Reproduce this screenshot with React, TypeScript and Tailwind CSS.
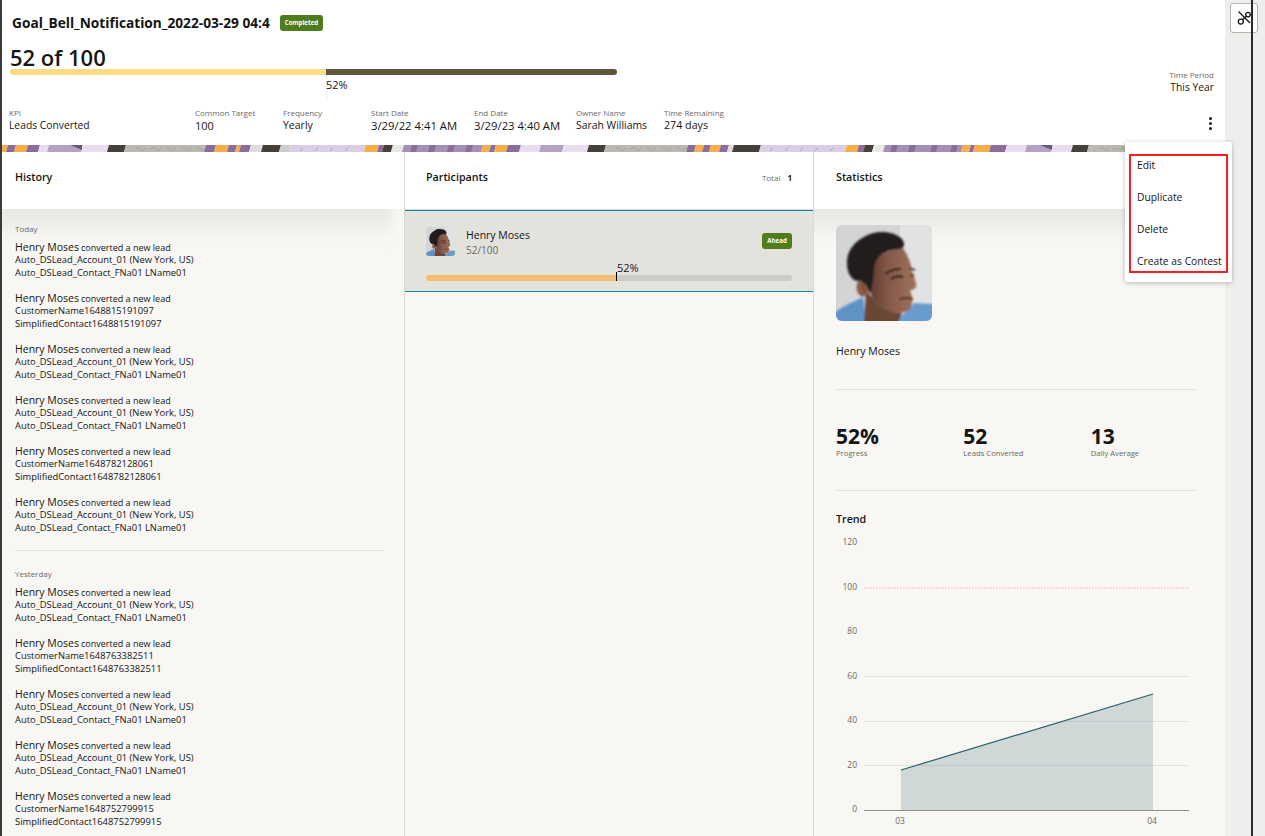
import React from 'react';

const stats = [
  { value: '52%', label: 'Progress' },
  { value: '52', label: 'Leads Converted' },
  { value: '13', label: 'Daily Average' },
];

const details = [
  { label: 'KPI', value: 'Leads Converted', width: 'w-[186px]', size: 'text-[10.3px]' },
  { label: 'Common Target', value: '100', width: 'w-[88px]', size: 'text-[11px]' },
  { label: 'Frequency', value: 'Yearly', width: 'w-[88px]', size: 'text-[10.5px]' },
  { label: 'Start Date', value: '3/29/22 4:41 AM', width: 'w-[103px]', size: 'text-[11.3px]' },
  { label: 'End Date', value: '3/29/23 4:40 AM', width: 'w-[102px]', size: 'text-[11.3px]' },
  { label: 'Owner Name', value: 'Sarah Williams', width: 'w-[88px]', size: 'text-[10.4px]' },
  { label: 'Time Remaining', value: '274 days', width: 'w-[90px]', size: 'text-[10.7px]' },
];

const account = ['Auto_DSLead_Account_01 (New York, US)', 'Auto_DSLead_Contact_FNa01 LName01'];
const contact = (id: string) => [`CustomerName${id}`, `SimplifiedContact${id}`];

const today = [account, contact('1648815191097'), account, account, contact('1648782128061'), account];
const yesterday = [account, contact('1648763382511'), account, account, contact('1648752799915')];

// x0, x1, colour of each slice of the banner, left to right
const O = '#f5ae4a';
const P = '#8a6d9b';
const L = '#e8dcef';
const M = '#b5a1c6';
const D = '#45403a';
const G = '#bbb8b2';
const H = '#dccde6';
const S = '#a48fb6';
const bands: [number, number, string][] = [
  [0, 7, O], [7, 15, P], [15, 27, O], [27, 39, P], [39, 48, L], [48, 82, M], [82, 108, L], [108, 125, D],
  [125, 205, G], [205, 215, P], [215, 228, O], [228, 236, P], [236, 240, O], [240, 250, P], [250, 262, '#ddd'],
  [262, 280, D], [280, 290, '#ccc'], [290, 365, H], [365, 378, O], [378, 383, P], [383, 392, D],
  [392, 403, '#e8e8e4'], [403, 482, S], [482, 490, O], [490, 495, P], [495, 507, O], [507, 520, P],
  [520, 540, L], [540, 563, M], [563, 588, L], [588, 605, D], [605, 687, G], [687, 695, P], [695, 703, O],
  [703, 710, P], [710, 720, O], [720, 728, P], [728, 733, '#ddd'], [733, 760, D], [760, 846, H], [846, 858, O],
  [858, 864, P], [864, 873, D], [873, 884, '#e8e8e4'], [884, 962, S], [962, 970, O], [970, 974, P], [974, 990, O],
  [990, 1006, P], [1006, 1026, L], [1026, 1052, M], [1052, 1072, L], [1072, 1088, D], [1088, 1225, G],
];

// small marks drawn over the grey and lilac slices
const marks = [135, 150, 165, 180, 195, 615, 630, 645, 660, 675, 1098, 1112, 1126];
const hatches = [300, 315, 330, 345, 770, 785, 800, 815, 830];
const stripes = [410, 428, 447, 465, 890, 908, 930, 950];

const Banner = () => (
  <svg width="1225" height="7" viewBox="0 0 1225 7" className="block shrink-0">
    {bands.map(([a, b, c], i) => (
      <polygon key={i} points={`${a + 1},0 ${b + 1},0 ${b - 1},7 ${a - 1},7`} fill={c} />
    ))}
    {stripes.map((x) => (
      <polygon key={x} points={`${x},7 ${x + 2},0 ${x + 8},0 ${x + 6},7`} fill="#8a6d9b" />
    ))}
    {marks.map((x) => (
      <path key={x} d={`M${x} 5 q3 -4 6 -1 t5 -2`} stroke="#9a9791" strokeWidth="0.6" fill="none" />
    ))}
    {hatches.map((x) => (
      <line key={x} x1={x} y1="6" x2={x + 3} y2="3" stroke="#8f7a9e" strokeWidth="0.6" />
    ))}
    <polygon points="70,0 82,0 82,5" fill="#6a5a70" />
    <polygon points="1040,0 1052,0 1052,5" fill="#6a5a70" />
  </svg>
);

const Portrait = ({ className }: { className: string }) => (
  <svg viewBox="0 0 96 96" className={className}>
    <defs>
      <filter id="soft" x="-5%" y="-5%" width="110%" height="110%">
        <feGaussianBlur stdDeviation="0.8" />
      </filter>
      <linearGradient id="skin" x1="0" x2="1" y1="0" y2="0">
        <stop offset="0" stopColor="#5f3d2e" />
        <stop offset="0.4" stopColor="#85594a" />
        <stop offset="1" stopColor="#a0735a" />
      </linearGradient>
    </defs>
    <rect width="96" height="96" fill="#d3d4d6" />
    <rect x="64" width="32" height="96" fill="#e1e2e4" />
    <g filter="url(#soft)">
      <path d="M-2 88 C8 80 20 76 27 72 L30 98 L-2 98Z" fill="#5f93c8" />
      <path d="M60 98 L66 90 C72 86 76 82 78 78 L98 79 L98 98Z" fill="#6a9bcd" />
      <path d="M30 66 L28 98 L62 98 L66 88 C52 88 42 80 36 72Z" fill="#6a4635" />
      <path d="M38 34 C46 27 58 24 66 22 C72 30 75 38 76 46 C78 52 81 58 80 62 C79 65 75 64 74 66 C76 70 77 74 76 78 C76 84 72 88 62 88 C52 88 42 80 36 72 C33 60 34 44 38 34Z" fill="url(#skin)" />
      <ellipse cx="27" cy="62" rx="6.5" ry="9.5" fill="#8c5c44" />
      <path d="M29 56 Q25 60 29 68" stroke="#5d3a2a" strokeWidth="1.2" fill="none" />
      <path d="M12 46 C8 30 16 18 28 12 C40 4 58 6 66 14 C70 20 68 24 62 24 C52 25 44 28 40 36 C37 44 38 50 37 56 L34 70 C32 60 26 54 20 56 C16 54 13 50 12 46Z" fill="#201e1d" />
      <path d="M49 49 Q56 44 65 44" stroke="#241712" strokeWidth="2" fill="none" />
      <path d="M73 43 L79 45" stroke="#241712" strokeWidth="1.5" fill="none" />
      <path d="M55 54 Q61 50 67 52" stroke="#241712" strokeWidth="2.2" fill="none" />
      <path d="M74 51 L78 50" stroke="#241712" strokeWidth="1.6" fill="none" />
      <path d="M63 74 Q70 72 77 74" stroke="#4f2a24" strokeWidth="1.8" fill="none" />
    </g>
  </svg>
);

const Chart = () => {
  const ticks = [
    { v: '120', y: 32 },
    { v: '100', y: 77 },
    { v: '80', y: 121 },
    { v: '60', y: 166 },
    { v: '40', y: 210 },
    { v: '20', y: 255 },
    { v: '0', y: 299 },
  ];
  return (
    <svg width="389" height="310" viewBox="0 16 389 310" className="block" fontFamily="'Open Sans', sans-serif">
      {ticks.map((t) => (
        <text key={t.v} x="37" y={t.y + 3} textAnchor="end" fontSize="8.5" fill="#6b6966">{t.v}</text>
      ))}
      <line x1="44" x2="369" y1="166.5" y2="166.5" stroke="#e2e4e5" />
      <line x1="44" x2="369" y1="211.5" y2="211.5" stroke="#e2e4e5" />
      <line x1="44" x2="369" y1="255.5" y2="255.5" stroke="#e2e4e5" />
      <line x1="44" x2="369" y1="78" y2="78" stroke="#f6c9ca" strokeWidth="1.5" strokeDasharray="1.5 1.5" />
      <polygon points="81,260 333,184 333,300 81,300" fill="#2b5f69" fillOpacity="0.2" />
      <line x1="81" y1="260" x2="333" y2="184" stroke="#2b5f69" strokeWidth="1.2" />
      <line x1="44" x2="369" y1="300.5" y2="300.5" stroke="#8e8e8c" />
      <text x="80" y="314" textAnchor="middle" fontSize="8.5" fill="#6b6966">03</text>
      <text x="332" y="314" textAnchor="middle" fontSize="8.5" fill="#6b6966">04</text>
    </svg>
  );
};

const Entry = ({ lines }: { lines: string[] }) => (
  <div className="h-[51px] text-[#161513]">
    <div className="h-[13px] leading-[13px] whitespace-nowrap relative -top-[2px]">
      <span className="text-[10.5px]">Henry Moses</span><span className="text-[9px] ml-[2px]">converted a new lead</span>
    </div>
    {lines.map((l) => (
      <div key={l} className="h-[12.5px] leading-[12.5px] text-[9.4px] whitespace-nowrap">{l}</div>
    ))}
  </div>
);

const PanelHead = ({ title, children }: { title: string; children?: React.ReactNode }) => (
  <div className="h-[57px] bg-white flex items-start justify-between shrink-0">
    <div className="text-[10.7px] font-semibold text-[#161513] leading-[14px] mt-[18px]">{title}</div>
    {children}
  </div>
);

const TopShade = () => (
  <div className="h-[42px] bg-gradient-to-b from-[#e9e8e4] via-[#ebeae6] to-[#f8f7f3] absolute -top-[12px] -left-[10px] right-[12px] blur-[4px]" />
);

export default function App() {
  return (
    <div className="relative h-[836px] w-[1265px] overflow-hidden flex bg-[#eeeeec] text-[#161513] font-['Open_Sans',sans-serif]">
      <div className="w-[1225px] h-full flex flex-col bg-white shrink-0">
        {/* Goal header */}
        <div className="h-[145px] shrink-0 flex flex-col relative">
          <div className="flex h-[101px] shrink-0">
            <div className="w-[617px] pl-[10px] shrink-0">
              <div className="flex items-center h-[46px] pl-[2px]">
                <div className="w-[259px] mr-[2px] overflow-hidden whitespace-nowrap text-[13.7px] font-bold leading-[16px]">Goal_Bell_Notification_2022-03-29 04:41 AM</div>
                <div className="ml-[7px] h-[16px] w-[43px] rounded-[3px] bg-[#4f7d1e] text-white text-[6.2px] font-bold flex items-center justify-center">Completed</div>
              </div>
              <div className="text-[22px] font-semibold leading-[23px] h-[23px]">52 of 100</div>
              <div className="flex h-[6px] rounded-full overflow-hidden">
                <div className="w-[316px] bg-[#fbdb85]" />
                <div className="flex-1 bg-[#5f553c]" />
              </div>
              <div className="ml-[316px] h-[26px] border-l border-[#eeeeee] text-[11px] leading-[20px] -mr-[10px]">
                <span className="-ml-[1px]">52%</span>
              </div>
            </div>
            <div className="flex-1 flex flex-col items-end pr-[11px] pt-[69px]">
              <div className="text-[8px] text-[#6b6966] leading-[11px]">Time Period</div>
              <div className="text-[10.3px] leading-[14px]">This Year</div>
            </div>
          </div>
          <div className="flex pl-[9px] mt-[6px]">
            {details.map((d) => (
              <div key={d.label} className={`${d.width} shrink-0`}>
                <div className="text-[8px] text-[#6b6966] leading-[12px] whitespace-nowrap">{d.label}</div>
                <div className={`${d.size} leading-[13px] whitespace-nowrap`}>{d.value}</div>
              </div>
            ))}
            <div className="ml-auto mr-[13px] flex flex-col gap-[2px] mt-[10px]">
              <div className="w-[3px] h-[3px] rounded-full bg-[#161513]" />
              <div className="w-[3px] h-[3px] rounded-full bg-[#161513]" />
              <div className="w-[3px] h-[3px] rounded-full bg-[#161513]" />
            </div>
          </div>
        </div>

        <Banner />

        <div className="flex-1 min-h-0 flex bg-[#f8f7f3]">
          {/* History */}
          <div className="w-[405px] shrink-0 pl-[2px] border-r border-[#d8d7d2] flex flex-col">
            <div className="pl-[13px] bg-white"><PanelHead title="History" /></div>
            <div className="relative flex-1 min-h-0 pl-[13px] pr-[20px] overflow-hidden">
              <TopShade />
              <div className="relative">
                <div className="text-[8px] text-[#6b6966] leading-[12px] pt-[14px] pb-[6px]">Today</div>
                {today.map((lines, i) => <Entry key={i} lines={lines} />)}
                <div className="border-t border-[#e0dfda] mt-[3px]" />
                <div className="text-[8px] text-[#6b6966] leading-[12px] pt-[17px] pb-[6px]">Yesterday</div>
                {yesterday.map((lines, i) => <Entry key={i} lines={lines} />)}
              </div>
            </div>
          </div>

          {/* Participants */}
          <div className="w-[409px] shrink-0 border-r border-[#d8d7d2] flex flex-col">
            <div className="pl-[21px] bg-white border-b border-[#d8d7d2]">
              <PanelHead title="Participants">
                <div className="flex gap-[7px] mt-[20px] mr-[21px] text-[8px] leading-[11px]">
                  <span className="text-[#6b6966]">Total</span>
                  <span className="font-bold">1</span>
                </div>
              </PanelHead>
            </div>
            <div className="h-[82px] shrink-0 bg-[#e3e2dd] border-y border-[#1a85ab] px-[21px] pt-[16px]">
              <div className="flex">
                <Portrait className="w-[29px] h-[29px] rounded-[3px] shrink-0" />
                <div className="ml-[11px] flex-1 pt-[1px]">
                  <div className="text-[10.5px] leading-[15px]">Henry Moses</div>
                  <div className="text-[10px] leading-[14px] text-[#6b6966]">52/100</div>
                </div>
                <div className="mt-[6px] h-[16px] w-[30px] rounded-[3px] bg-[#4f7d1e] text-white text-[6.2px] font-bold flex items-center justify-center">Ahead</div>
              </div>
              <div className="ml-[191px] text-[11px] leading-[14px] h-[14px] mt-[4px]">52%</div>
              <div className="relative">
                <div className="flex h-[6px] rounded-full overflow-hidden">
                  <div className="w-[190px] bg-[#f4bd6f]" />
                  <div className="flex-1 bg-[#cdcbc9]" />
                </div>
                <div className="absolute left-[190px] -top-[3px] h-[9px] w-px bg-black" />
              </div>
            </div>
          </div>

          {/* Statistics */}
          <div className="flex-1 min-w-0 flex flex-col">
            <div className="pl-[22px] bg-white"><PanelHead title="Statistics" /></div>
            <div className="relative flex-1 min-h-0 pl-[22px] pr-[29px] overflow-hidden">
              <TopShade />
              <div className="relative pt-[16px]">
                <Portrait className="w-[96px] h-[96px] rounded-[6px] block" />
                <div className="text-[10.5px] leading-[15px] mt-[23px]">Henry Moses</div>
                <div className="border-t border-[#e0dfda] mt-[30px]" />
                <div className="grid grid-cols-3 w-[382px] mt-[35px]">
                  {stats.map((s) => (
                    <div key={s.label}>
                      <div className="text-[21px] font-bold leading-[22px]">{s.value}</div>
                      <div className="text-[7.7px] text-[#6b6966] leading-[11px] mt-[1px]">{s.label}</div>
                    </div>
                  ))}
                </div>
                <div className="border-t border-[#e0dfda] mt-[31px]" />
                <div className="text-[10.7px] font-semibold leading-[14px] mt-[21px]">Trend</div>
                <div className="-ml-[16px]"><Chart /></div>
              </div>
            </div>
          </div>
        </div>
      </div>

      {/* Collapsed side strip */}
      <div className="flex-1 relative">
        <div className="absolute top-[3px] left-[5px] w-[28px] h-[30px] rounded-[3px] border border-[#b5b4b1] bg-white flex items-center justify-center">
          <svg width="16" height="16" viewBox="0 0 16 16" fill="none" stroke="#161513" strokeWidth="1.3">
            <line x1="2.5" y1="1.5" x2="14" y2="13" />
            <circle cx="4.8" cy="11.6" r="2.5" />
            <circle cx="12" cy="4.6" r="2.3" />
            <line x1="6.6" y1="9.8" x2="10.3" y2="6.2" />
          </svg>
        </div>
        <div className="absolute top-0 bottom-0 left-[26px] w-[2px] bg-[#2b2a28]" />
      </div>

      {/* Left window edge */}
      <div className="absolute top-0 bottom-0 left-0 w-[2px] bg-[#3a3a38]" />

      {/* Actions menu */}
      <div className="absolute left-[1125px] top-[142px] w-[107px] h-[140px] bg-white rounded-[2px] shadow-[0_1px_5px_rgba(0,0,0,0.25)] pt-[7px] text-[10.3px] leading-[32px] pl-[12px]">
        <div>Edit</div>
        <div>Duplicate</div>
        <div>Delete</div>
        <div className="whitespace-nowrap">Create as Contest</div>
        <div className="absolute left-[4px] top-[12px] w-[99px] h-[119px] border-2 border-[#fb1c24]" />
      </div>
    </div>
  );
}
